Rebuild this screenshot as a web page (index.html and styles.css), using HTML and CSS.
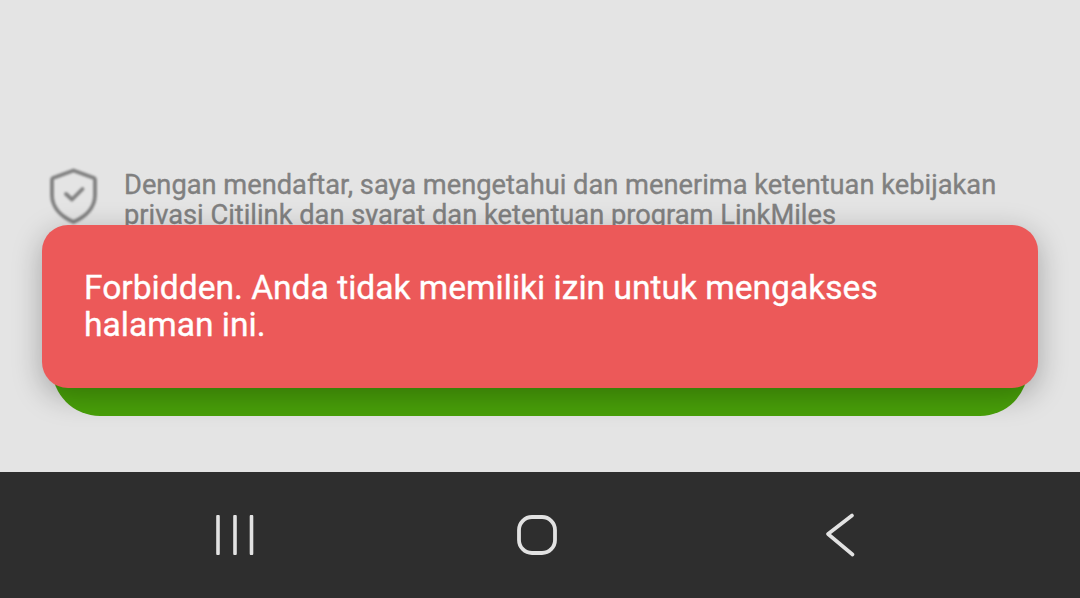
FILE: index.html
```html
<!DOCTYPE html>
<html lang="id">
<head>
<meta charset="utf-8">
<title>Citilink</title>
<link rel="stylesheet" href="styles.css">
</head>
<body>
<main class="screen">
  <section class="content">
    <div class="consent">
      <svg class="shield" viewBox="0 0 50 60" width="50" height="60" aria-hidden="true">
        <path d="M25.500 2.500 L46 10 C47 10.500 47 11 47 12 V27 C47 40 37 49 25.500 54 C14 49 4 40 4 27 V12 C4 11 4 10.500 5 10 Z" fill="none" stroke="#808080" stroke-width="3.800" stroke-linejoin="round"/>
        <path d="M18 26 L24 31.500 L34.500 21" fill="none" stroke="#808080" stroke-width="3.800" stroke-linecap="round" stroke-linejoin="round"/>
      </svg>
      <p class="consent-text">Dengan mendaftar, saya mengetahui dan menerima ketentuan kebijakan privasi Citilink dan syarat dan ketentuan program LinkMiles</p>
    </div>
    <button class="submit" type="button"></button>
    <div class="toast">Forbidden. Anda tidak memiliki izin untuk mengakses halaman ini.</div>
  </section>
  <nav class="navbar">
    <svg class="nav-icon" viewBox="0 0 40 40" width="40" height="40" aria-hidden="true">
      <path d="M3 1.500 V38.500 M20 1.500 V38.500 M36.500 1.500 V38.500" fill="none" stroke="#e2e2e2" stroke-width="3.600" stroke-linecap="round"/>
    </svg>
    <svg class="nav-icon" viewBox="0 0 50 44" width="50" height="44" aria-hidden="true">
      <rect x="4" y="4" width="36" height="36" rx="13" fill="none" stroke="#e2e2e2" stroke-width="3.800"/>
    </svg>
    <svg class="nav-icon" viewBox="0 0 30 44" width="30" height="44" aria-hidden="true">
      <path d="M27 2.500 L3 21 L27.500 41.500" fill="none" stroke="#e2e2e2" stroke-width="3.600" stroke-linecap="round" stroke-linejoin="round"/>
    </svg>
  </nav>
</main>
</body>
</html>
```
FILE: styles.css
```css
* {
  box-sizing: border-box;
}

html,
body {
  margin: 0;
  padding: 0;
  height: 598px;
  overflow: hidden;
}

body {
  font-family: Roboto, "Liberation Sans", sans-serif;
  background: #e4e4e4;
}

.screen {
  display: flex;
  flex-direction: column;
  width: 1080px;
  height: 598px;
}

.content {
  position: relative;
  height: 472px;
  padding: 168px 52px 0 48px;
  background: #e4e4e4;
  overflow: hidden;
}

.consent {
  display: flex;
  align-items: flex-start;
  gap: 26px;
}

.shield {
  flex: none;
  filter: blur(0.8px);
}

.consent-text {
  margin: 0;
  padding-top: 2px;
  font-size: 27.25px;
  line-height: 30px;
  color: #808080;
  -webkit-text-stroke: 0.35px #808080;
  width: 890px;
}

.submit {
  display: block;
  width: 976px;
  height: 116px;
  margin: 70px 0 0 4px;
  border: 0;
  border-radius: 48px;
  background: #49a109;
}

.toast {
  position: absolute;
  left: 42px;
  top: 225px;
  width: 996px;
  height: 163px;
  padding: 44px 42px 0;
  border-radius: 26px;
  background: #ec5959;
  color: #ffffff;
  font-size: 33.6px;
  line-height: 37px;
  -webkit-text-stroke: 0.35px #ffffff;
  box-shadow: 0 8px 30px rgba(0, 0, 0, 0.28);
}

.navbar {
  display: flex;
  align-items: center;
  gap: 260px;
  height: 126px;
  padding: 0 0 0 215px;
  background: #2e2e2e;
}

.nav-icon {
  display: block;
  flex: none;
}
```
